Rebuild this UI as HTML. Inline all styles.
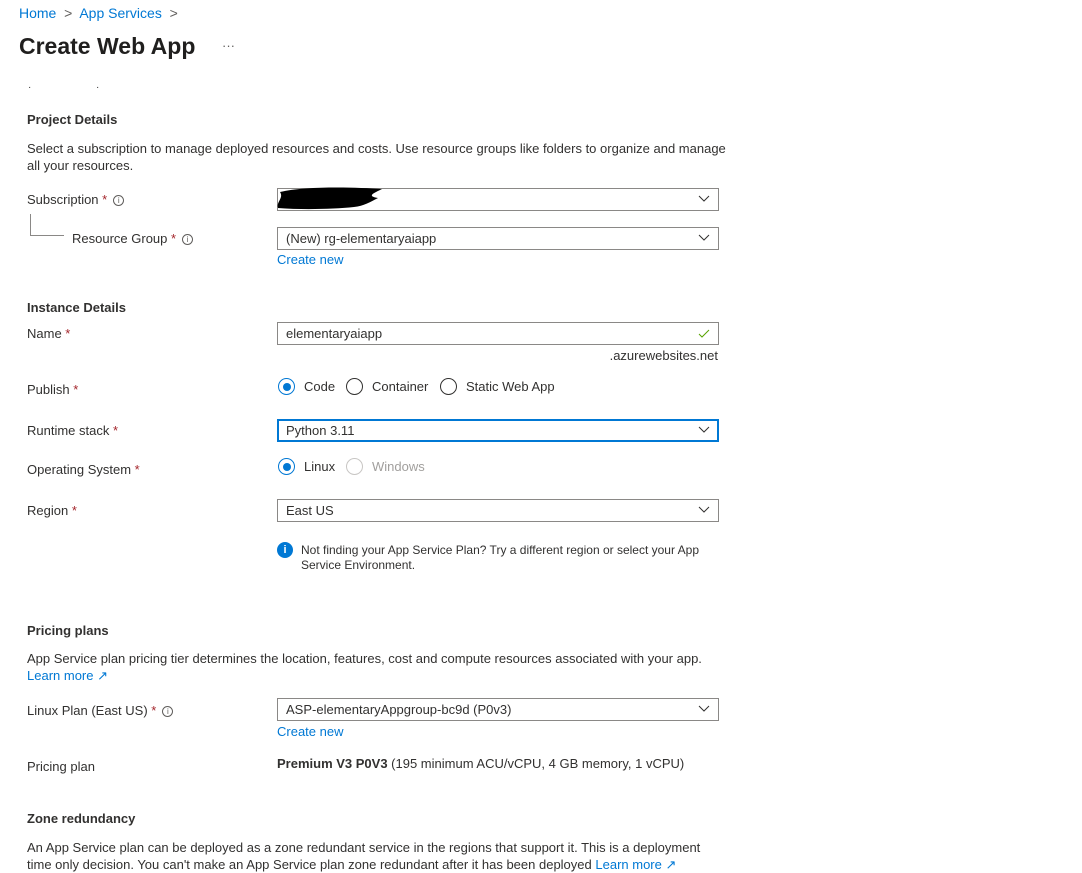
<!DOCTYPE html>
<html><head><meta charset="utf-8"><style>
*{box-sizing:border-box}
body{margin:0;width:1082px;height:868px;overflow:hidden;background:#fff;font-family:"Liberation Sans",sans-serif;font-size:13px;color:#323130;position:relative}
.a{position:absolute;white-space:nowrap}
.lk{color:#0078d4}
.h{font-weight:bold;font-size:13px}
.req{color:#a4262c}
.inp{position:absolute;left:277px;width:442px;height:23px;border:1px solid #8a8886;padding:3px 8px;font-size:13px}
.inp svg{position:absolute;right:8px;top:6px}
.info{display:inline-block;width:11px;height:11px;border:1px solid #605e5c;border-radius:50%;font-size:8px;text-align:center;line-height:10px;color:#605e5c;vertical-align:middle;margin-left:6px}
.rad{position:absolute;width:17px;height:17px;border:1px solid #323130;border-radius:50%}
.rad.on{border-color:#0078d4}
.rad.on:after{content:"";position:absolute;left:3.5px;top:3.5px;width:8px;height:8px;border-radius:50%;background:#0078d4}
</style></head><body>
<div class="a" style="left:19px;top:5px;font-size:14px"><span class="lk">Home</span> <span style="color:#605e5c">&nbsp;&gt;&nbsp;</span> <span class="lk">App Services</span> <span style="color:#605e5c">&nbsp;&gt;</span></div>
<div class="a" style="left:19px;top:33px;font-size:23px;font-weight:600;color:#201f1e">Create Web App</div>
<div class="a" style="left:222px;top:38px;font-size:13px;color:#605e5c">···</div>
<div class="a" style="left:28px;top:82px;font-size:10px">·</div><div class="a" style="left:96px;top:82px;font-size:10px">·</div>

<div class="a h" style="left:27px;top:112px">Project Details</div>
<div class="a" style="left:27px;top:140px;line-height:17px;white-space:normal;width:700px">Select a subscription to manage deployed resources and costs. Use resource groups like folders to organize and manage all your resources.</div>
<div class="a" style="left:27px;top:192px">Subscription <span class="req">*</span><span class="info">i</span></div>
<div class="a" style="left:30px;top:214px;width:34px;height:22px;border-left:1px solid #8a8886;border-bottom:1px solid #8a8886"></div>
<div class="a" style="left:72px;top:231px">Resource Group <span class="req">*</span><span class="info">i</span></div>
<div class="inp" style="top:188px"><svg width="12" height="8"><path d="M1 1l5 5 5-5" fill="none" stroke="#323130"/></svg></div>
<svg class="a" style="left:274px;top:184px" width="112" height="28"><path d="M6 8 C30 2,80 3,108 5 C100 9,92 12,104 14 C96 18,90 22,80 23 C60 25,30 26,4 24 C2 18,10 14,6 8Z" fill="#000"/></svg>
<div class="inp" style="top:227px">(New) rg-elementaryaiapp<svg width="12" height="8"><path d="M1 1l5 5 5-5" fill="none" stroke="#323130"/></svg></div>
<div class="a lk" style="left:277px;top:252px">Create new</div>

<div class="a h" style="left:27px;top:300px">Instance Details</div>
<div class="a" style="left:27px;top:326px">Name <span class="req">*</span></div>
<div class="inp" style="top:322px">elementaryaiapp<svg width="12" height="9"><path d="M1 5l3 3 7-7" fill="none" stroke="#57a300"/></svg></div>
<div class="a" style="right:364px;top:348px">.azurewebsites.net</div>
<div class="a" style="left:27px;top:382px">Publish <span class="req">*</span></div>
<div class="rad on" style="left:278px;top:378px"></div><div class="a" style="left:304px;top:379px">Code</div>
<div class="rad" style="left:346px;top:378px"></div><div class="a" style="left:372px;top:379px">Container</div>
<div class="rad" style="left:440px;top:378px"></div><div class="a" style="left:466px;top:379px">Static Web App</div>
<div class="a" style="left:27px;top:423px">Runtime stack <span class="req">*</span></div>
<div class="inp" style="top:419px;border:2px solid #0078d4;padding-top:2px;padding-left:7px">Python 3.11<svg width="12" height="8" style="right:7px;top:5px"><path d="M1 1l5 5 5-5" fill="none" stroke="#323130"/></svg></div>
<div class="a" style="left:27px;top:462px">Operating System <span class="req">*</span></div>
<div class="rad on" style="left:278px;top:458px"></div><div class="a" style="left:304px;top:459px">Linux</div>
<div class="rad" style="left:346px;top:458px;border-color:#c8c6c4"></div><div class="a" style="left:372px;top:459px;color:#a19f9d">Windows</div>
<div class="a" style="left:27px;top:503px">Region <span class="req">*</span></div>
<div class="inp" style="top:499px">East US<svg width="12" height="8"><path d="M1 1l5 5 5-5" fill="none" stroke="#323130"/></svg></div>
<div class="a" style="left:277px;top:542px;width:16px;height:16px;border-radius:50%;background:#0078d4;color:#fff;font-weight:bold;font-size:11px;text-align:center;line-height:16px">i</div>
<div class="a" style="left:301px;top:543px;font-size:12px;line-height:15px">Not finding your App Service Plan? Try a different region or select your App<br>Service Environment.</div>

<div class="a h" style="left:27px;top:623px">Pricing plans</div>
<div class="a" style="left:27px;top:651px">App Service plan pricing tier determines the location, features, cost and compute resources associated with your app.</div>
<div class="a lk" style="left:27px;top:668px">Learn more ↗</div>
<div class="a" style="left:27px;top:703px">Linux Plan (East US) <span class="req">*</span><span class="info">i</span></div>
<div class="inp" style="top:698px">ASP-elementaryAppgroup-bc9d (P0v3)<svg width="12" height="8"><path d="M1 1l5 5 5-5" fill="none" stroke="#323130"/></svg></div>
<div class="a lk" style="left:277px;top:724px">Create new</div>
<div class="a" style="left:27px;top:759px">Pricing plan</div>
<div class="a" style="left:277px;top:756px"><b>Premium V3 P0V3</b> (195 minimum ACU/vCPU, 4 GB memory, 1 vCPU)</div>

<div class="a h" style="left:27px;top:811px">Zone redundancy</div>
<div class="a" style="left:27px;top:839px;line-height:17px">An App Service plan can be deployed as a zone redundant service in the regions that support it. This is a deployment<br>time only decision. You can't make an App Service plan zone redundant after it has been deployed <span class="lk">Learn more ↗</span></div>
</body></html>
